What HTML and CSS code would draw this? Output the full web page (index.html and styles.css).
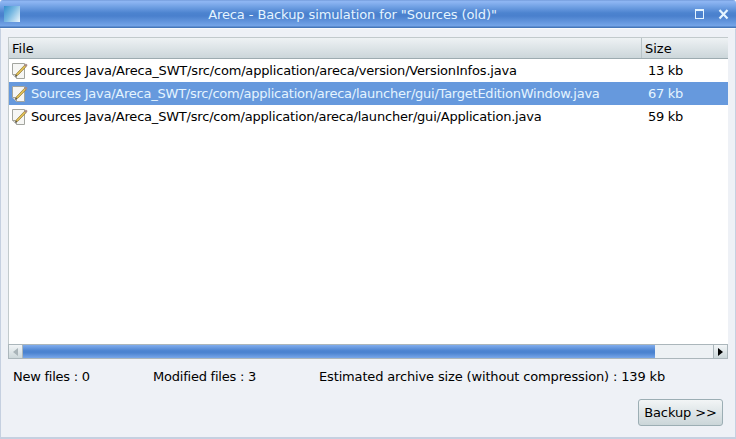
FILE: index.html
```html
<!DOCTYPE html>
<html lang="en">
<head>
<meta charset="utf-8">
<title>Areca - Backup simulation</title>
<link rel="stylesheet" href="styles.css">
</head>
<body>
<svg class="defs" width="0" height="0" aria-hidden="true">
  <symbol id="edit" viewBox="0 0 16 16">
    <path d="M.5 .5H12.5V15.5H4.5L.5 11.5Z" fill="#f6f6f4" stroke="#a3a59f"/>
    <path d="M.5 11.5H4.5V15.5" fill="#ddd" stroke="#a3a59f"/>
    <path d="M3.6 13L4.4 10.8L12.6 2.2L14.2 3.6L6 12.1Z" fill="#e3c155" stroke="#8b7434" stroke-width=".7"/>
    <path d="M12.2 2.4L13.9 .6L15.6 2L14.1 3.9Z" fill="#a98c86"/>
    <path d="M3 14L3.9 11.9L5 12.8Z" fill="#333"/>
  </symbol>
</svg>
<main class="window">
  <header class="titlebar">
    <span class="app-icon"></span>
    <h1 class="title">Areca - Backup simulation for "Sources (old)"</h1>
    <svg class="controls" width="36" height="12" viewBox="0 0 36 12">
      <path d="M1 1H10V11H1ZM2 3V10H9V3Z" fill="#e4f4ff" fill-rule="evenodd"/>
      <path d="M25.5 2L33.5 10.5M33.5 2L25.5 10.5" stroke="#e4f4ff" stroke-width="2.2"/>
    </svg>
  </header>
  <section class="content">
    <div class="table">
      <div class="row head"><span class="file">File</span><span class="size">Size</span></div>
      <div class="row"><span class="file"><svg class="icon"><use href="#edit"/></svg><span class="path-a">Sources Java/Areca_SWT/src/com/application/areca/version/VersionInfos.java</span></span><span class="size">13 kb</span></div>
      <div class="row selected"><span class="file"><svg class="icon"><use href="#edit"/></svg><span class="path-b">Sources Java/Areca_SWT/src/com/application/areca/launcher/gui/TargetEditionWindow.java</span></span><span class="size">67 kb</span></div>
      <div class="row"><span class="file"><svg class="icon"><use href="#edit"/></svg><span class="path-c">Sources Java/Areca_SWT/src/com/application/areca/launcher/gui/Application.java</span></span><span class="size">59 kb</span></div>
    </div>
    <div class="scrollbar">
      <span class="arrow left"><svg width="5" height="8"><path d="M5 0V8L0 4Z" fill="#a9b4b9"/></svg></span>
      <span class="track"><span class="thumb"></span></span>
      <span class="arrow right"><svg width="5" height="8"><path d="M0 0V8L5 4Z" fill="#000"/></svg></span>
    </div>
    <div class="summary"><span class="new">New files : 0</span><span class="modified">Modified files : 3</span><span class="estimate">Estimated archive size (without compression) : 139 kb</span></div>
    <div class="actions"><button class="backup">Backup &gt;&gt;</button></div>
  </section>
</main>
</body>
</html>
```
FILE: styles.css
```css
* { box-sizing: border-box; }
body { margin: 0; font: 13px/16px "DejaVu Sans", sans-serif; color: #000; }
.defs { position: absolute; }
.window { width: 736px; height: 439px; background: #eef1f6; display: flex; flex-direction: column; border-radius: 3px 3px 0 0; overflow: hidden; }
.titlebar { height: 28px; flex: none; display: flex; align-items: center; padding: 0 6px 0 4px; background: linear-gradient(#6d94d4 0, #8db5f2 1px, #8db5f2 2px, #6f9fe3 7px, #4c83cf 13px, #4a80cd 16px, #75a5e8 26px, #4677b9 27px, #4677b9 28px); }
.app-icon { width: 16px; height: 16px; background: linear-gradient(125deg, #348dcc, #79b9e2 45%, #eef6fb); }
.title { flex: 1; margin: 0; padding: 1px 9px 0 0; text-align: center; font-size: 13px; font-weight: normal; letter-spacing: -0.1px; color: #e4f4ff; }
.controls { flex: none; }
.content { flex: 1; padding: 8px 7px 0; border: solid #c5d0e0; border-width: 0 1px 2px; border-top: 1px solid #f8fafc; }
.table { height: 307px; background: #fff; border: solid #c2cacc; border-width: 1px 0 0 1px; }
.row { display: flex; height: 23px; align-items: center; }
.head { height: 21px; background: linear-gradient(#eef2f4, #ccd6da); border-bottom: 1px solid #9dabb0; }
.file { width: 633px; display: flex; align-items: center; padding-left: 3px; white-space: nowrap; }
.head .file { padding-top: 2px; }
.path-a { letter-spacing: -0.178px; }
.path-b { letter-spacing: -0.235px; }
.path-c { letter-spacing: -0.2px; }
.size { padding-left: 6px; letter-spacing: -0.3px; }
.head .size { align-self: stretch; padding: 3px 0 0 3px; border-left: 1px solid #b8c3c7; margin-left: -1px; letter-spacing: 0; }
.selected { background: #6699dd; color: #e4f4ff; }
.icon { width: 16px; height: 16px; margin-right: 3px; flex: none; }
.scrollbar { display: flex; height: 15px; border: 1px solid #abb6bb; background: #edf1f4; }
.arrow { width: 14px; display: flex; align-items: center; justify-content: center; background: linear-gradient(#f2f5f7, #ccd7da); }
.left { border-right: 1px solid #abb6bb; }
.right { border-left: 1px solid #abb6bb; }
.track { flex: 1; }
.thumb { display: block; width: 632px; height: 13px; background: linear-gradient(#80aced, #4b83d0 45%, #4b83d0 60%, #78a7e9); }
.summary { display: flex; margin-top: 10px; padding-left: 5px; white-space: nowrap; }
.new { width: 140px; letter-spacing: -0.25px; }
.modified { width: 166px; letter-spacing: -0.22px; }
.estimate { letter-spacing: -0.15px; }
.actions { display: flex; justify-content: flex-end; margin: 14px 5px 0 0; }
.backup { width: 85px; height: 27px; padding: 0; font: inherit; color: #000; letter-spacing: -0.1px; border: 1px solid #9caeb4; border-radius: 3px; background: linear-gradient(#f2f5f6, #cbd6d9); }
```
